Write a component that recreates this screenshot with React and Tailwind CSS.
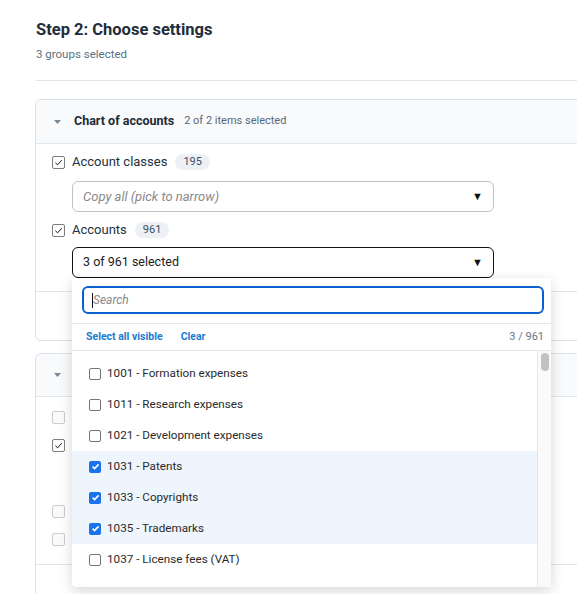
import React from "react";

const font = { fontFamily: "Roboto, 'Noto Sans', sans-serif" };

function Box({ checked, light }) {
  return (
    <span
      className={`w-[13px] h-[13px] shrink-0 rounded-[2px] border flex items-center justify-center ${
        light ? "border-[#c9cdd2] bg-[#fafafa]" : "border-[#7d7d7d] bg-white"
      }`}
    >
      {checked && (
        <svg width="9" height="9" viewBox="0 0 10 10">
          <path d="M1.5 5.2 L4 7.6 L8.6 2.4" fill="none" stroke="#111" strokeWidth="1.1" />
        </svg>
      )}
    </span>
  );
}

function ListBox({ checked }) {
  return checked ? (
    <span className="w-[12px] h-[12px] shrink-0 rounded-[2px] bg-[#1a73e8] flex items-center justify-center">
      <svg width="9" height="9" viewBox="0 0 10 10">
        <path d="M1.8 5.2 L4 7.4 L8.4 2.6" fill="none" stroke="#fff" strokeWidth="1.8" />
      </svg>
    </span>
  ) : (
    <span className="w-[12px] h-[12px] shrink-0 rounded-[2px] border border-[#767676] bg-white" />
  );
}

function Caret() {
  return (
    <svg width="7" height="4" viewBox="0 0 7 4" className="shrink-0">
      <path d="M0 0 L7 0 L3.5 4 Z" fill="#7b8a99" />
    </svg>
  );
}

function Row({ label, count, checked, light }) {
  return (
    <div className="flex items-center h-[20px]">
      <Box checked={checked} light={light} />
      <span className="ml-[7px] text-[13px] text-[#24303c]">{label}</span>
      {count && (
        <span className="ml-[8px] px-[8px] h-[16px] leading-[16px] rounded-full bg-[#edf1f6] text-[11px] text-[#3d4f61]">
          {count}
        </span>
      )}
    </div>
  );
}

function Select({ text, placeholder, active }) {
  return (
    <div
      className={`ml-[20px] w-[422px] h-[31px] rounded-[6px] border flex items-center justify-between pl-[10px] pr-[10px] ${
        active ? "border-[#111]" : "border-[#c2c2c2]"
      }`}
    >
      <span
        className={
          placeholder
            ? "text-[13px] italic text-[#8a8a8a]"
            : "text-[12.5px] text-[#1c1c1c]"
        }
      >
        {placeholder || text}
      </span>
      <span className="text-[11px] text-[#111] leading-none">▼</span>
    </div>
  );
}

const items = [
  { code: "1001 - Formation expenses" },
  { code: "1011 - Research expenses" },
  { code: "1021 - Development expenses" },
  { code: "1031 - Patents", checked: true },
  { code: "1033 - Copyrights", checked: true },
  { code: "1035 - Trademarks", checked: true },
  { code: "1037 - License fees (VAT)" },
];

export default function App() {
  return (
    <div className="relative w-[577px] h-[594px] overflow-hidden bg-white" style={font}>
      <div className="pl-[36px] pt-[19px]">
        <h1 className="text-[16.5px] font-bold text-[#1f2d3b] leading-[22px]">
          Step 2: Choose settings
        </h1>
        <p className="mt-[6px] text-[11.5px] text-[#5b7083] leading-[14px]">3 groups selected</p>
        <div className="mt-[19px] h-px bg-[#e1e4e8] w-[600px]" />

        {/* CHART OF ACCOUNTS */}
        <div className="mt-[18px] w-[600px] rounded-[6px] border border-[#dbe1e8] -ml-px">
          <div className="h-[44px] bg-[#f8fafc] rounded-t-[6px] border-b border-[#e1e6ec] flex items-center pl-[18px]">
            <Caret />
            <span className="ml-[13px] text-[12.5px] font-bold text-[#1d2935]">Chart of accounts</span>
            <span className="ml-[10px] text-[11px] text-[#56687a]">2 of 2 items selected</span>
          </div>
          <div className="pl-[16px] pt-[8px] pb-[13px] flex flex-col">
            <Row label="Account classes" count="195" checked />
            <div className="mt-[9px]">
              <Select placeholder="Copy all (pick to narrow)" />
            </div>
            <div className="mt-[8px]">
              <Row label="Accounts" count="961" checked />
            </div>
            <div className="mt-[7px]">
              <Select text="3 of 961 selected" active />
            </div>
          </div>
          <div className="h-[49px] border-t border-[#e1e6ec]" />
        </div>

        {/* SECOND GROUP */}
        <div className="mt-[12px] w-[600px] rounded-[6px] border border-[#dbe1e8] -ml-px">
          <div className="h-[43px] bg-[#f8fafc] rounded-t-[6px] border-b border-[#e1e6ec] flex items-center pl-[18px]">
            <Caret />
            <span className="ml-[13px] text-[12.5px] font-bold text-[#1d2935]">Journals</span>
          </div>
          <div className="pl-[16px] pt-[10px] pb-[15px] flex flex-col gap-[8px]">
            <Row label="Journal types" light />
            <Row label="Journals" checked />
            <div className="-mt-[1px]">
              <Select placeholder="Copy all (pick to narrow)" />
            </div>
            <Row label="Fiscal years" light />
            <Row label="Tax codes" light />
          </div>
          <div className="h-[40px] border-t border-[#e1e6ec]" />
        </div>
      </div>

      {/* DROPDOWN */}
      <div className="absolute left-[72px] top-[278px] w-[479px] h-[309px] bg-white rounded-b-[4px] shadow-[0_4px_14px_rgba(0,0,0,0.16)] flex flex-col">
        <div className="pl-[10px] pr-[7px] pt-[8px] pb-[9px] border-b border-[#e4e6ea]">
          <div className="h-[28px] rounded-[6px] border-2 border-[#0b5fd0] flex items-center pl-[8px]">
            <span className="w-px h-[15px] bg-[#111]" />
            <span className="text-[12px] italic text-[#8a8a8a]">Search</span>
          </div>
        </div>
        <div className="h-[27px] shrink-0 border-b border-[#e4e6ea] flex items-center pl-[14px] pr-[7px]">
          <span className="text-[10.5px] font-bold text-[#1a7bd0]">Select all visible</span>
          <span className="ml-[18px] text-[10.5px] font-bold text-[#1a7bd0]">Clear</span>
          <span className="ml-auto text-[11px] text-[#6b7785]">3 / 961</span>
        </div>
        <div className="flex flex-1 min-h-0">
          <div className="flex-1 pt-[7px]">
            {items.map((it) => (
              <div
                key={it.code}
                className={`h-[31px] flex items-center pl-[17px] ${it.checked ? "bg-[#eef5fd]" : ""}`}
              >
                <ListBox checked={it.checked} />
                <span className="ml-[6px] text-[11.7px] text-[#2a2a2a]">{it.code}</span>
              </div>
            ))}
          </div>
          <div className="w-[14px] bg-[#fafafa] border-l border-[#e6e6e6] pt-[2px] flex justify-center">
            <div className="w-[8px] h-[18px] rounded-full bg-[#c1c1c1]" />
          </div>
        </div>
      </div>
    </div>
  );
}
